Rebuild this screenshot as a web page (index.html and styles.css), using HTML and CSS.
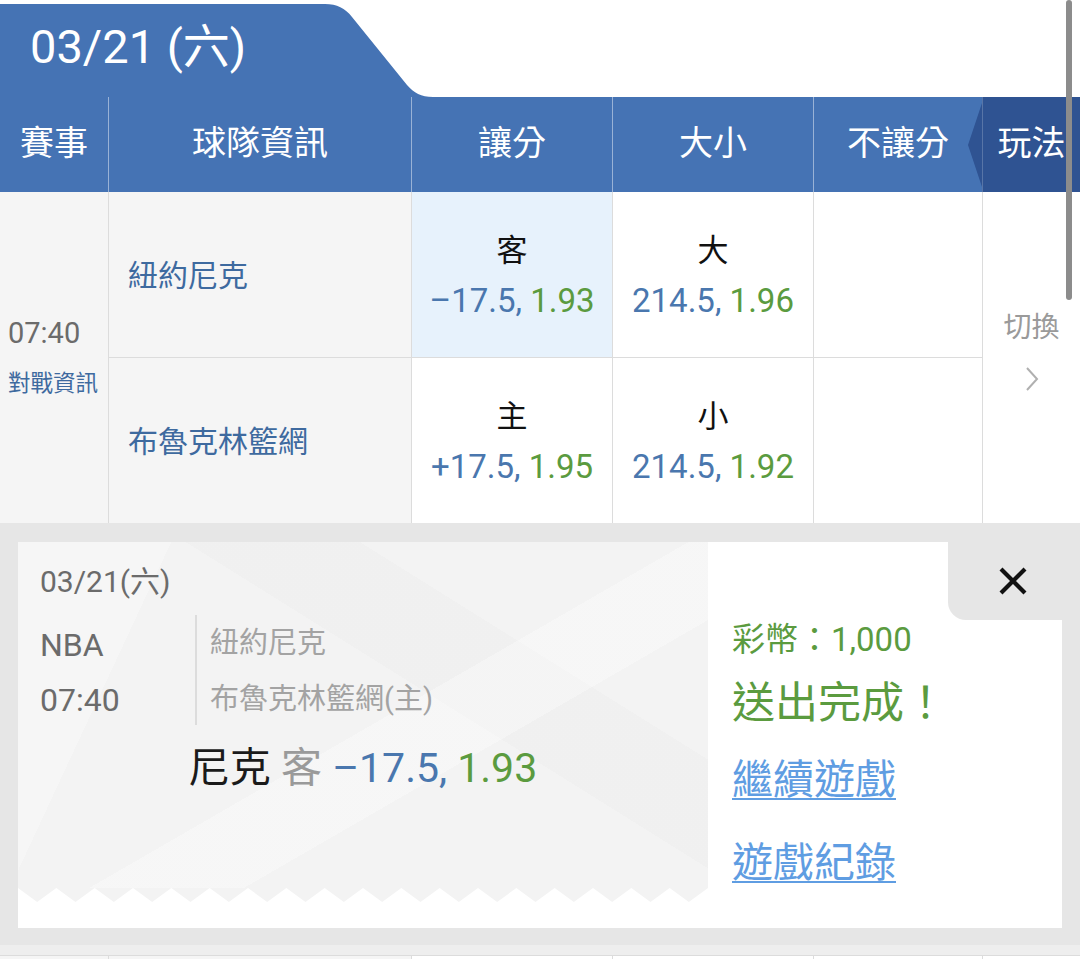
FILE: index.html
```html
<!DOCTYPE html>
<html lang="zh-Hant">
<head>
<meta charset="utf-8">
<title>投注</title>
<link rel="stylesheet" href="styles.css">
</head>
<body>
<div class="page">
  <div class="tab-bar">
    <div class="date-tab"><span class="lt">03/21 (</span>六<span class="lt">)</span></div>
    <svg class="tab-slope" width="118" height="93" viewBox="0 0 118 93"><path d="M0 0 H10 C22 0 30 4 37 13 L92 81 C99 89 106 93 118 93 H0 Z" fill="#4573b4"/></svg>
  </div>

  <div class="grid head">
    <div class="hcell">賽事</div>
    <div class="hcell">球隊資訊</div>
    <div class="hcell">讓分</div>
    <div class="hcell">大小</div>
    <div class="hcell">不讓分</div>
    <div class="hcell play">玩法</div>
  </div>

  <div class="grid rows">
    <div class="cell event">
      <div class="time lt">07:40</div>
      <div class="vs">對戰資訊</div>
    </div>
    <div class="cell team top">紐約尼克</div>
    <div class="cell odds top selected">
      <div class="side">客</div>
      <div class="line"><span class="num">–17.5,</span> <span class="rate">1.93</span></div>
    </div>
    <div class="cell odds top">
      <div class="side">大</div>
      <div class="line"><span class="num">214.5,</span> <span class="rate">1.96</span></div>
    </div>
    <div class="cell blank top"></div>
    <div class="cell switch">
      <div class="switch-label">切換</div>
      <svg class="chev" width="14" height="26" viewBox="0 0 14 26"><polyline points="2,2 12,13 2,24" fill="none" stroke="#b0b0b0" stroke-width="2"/></svg>
    </div>
    <div class="cell team">布魯克林籃網</div>
    <div class="cell odds">
      <div class="side">主</div>
      <div class="line"><span class="num">+17.5,</span> <span class="rate">1.95</span></div>
    </div>
    <div class="cell odds">
      <div class="side">小</div>
      <div class="line"><span class="num">214.5,</span> <span class="rate">1.92</span></div>
    </div>
    <div class="cell blank"></div>
  </div>

  <div class="overlay">
    <div class="card">
      <div class="ticket">
        <div class="ticket-body">
          <div class="t-date"><span class="lt">03/21(</span>六<span class="lt">)</span></div>
          <div class="t-info">
            <div class="t-meta lt">
              <div>NBA</div>
              <div>07:40</div>
            </div>
            <div class="t-teams">
              <div>紐約尼克</div>
              <div>布魯克林籃網(主)</div>
            </div>
          </div>
          <div class="t-bet"><span class="b-team">尼克</span> <span class="b-side">客</span> <span class="num">–17.5,</span> <span class="rate">1.93</span></div>
        </div>
        <svg class="zigzag" width="690" height="14" viewBox="0 0 180 14" preserveAspectRatio="none"><polygon fill="#f3f3f3" points="0,0 180,0 175,14 170,0 165,14 160,0 155,14 150,0 145,14 140,0 135,14 130,0 125,14 120,0 115,14 110,0 105,14 100,0 95,14 90,0 85,14 80,0 75,14 70,0 65,14 60,0 55,14 50,0 45,14 40,0 35,14 30,0 25,14 20,0 15,14 10,0 5,14 0,0"/></svg>
      </div>
      <div class="result">
        <div class="close-row">
          <div class="close">
            <svg width="30" height="28" viewBox="0 0 30 28"><path d="M3 2 L27 26 M27 2 L3 26" stroke="#111" stroke-width="4.2" stroke-linecap="butt"/></svg>
          </div>
        </div>
        <div class="coins">彩幣：<span class="lt">1,000</span></div>
        <div class="done">送出完成！</div>
        <a class="link first" href="#">繼續遊戲</a>
        <a class="link" href="#">遊戲紀錄</a>
      </div>
    </div>
  </div>

  <div class="strip"></div>
  <div class="grid foot">
    <div class="fcell"></div>
    <div class="fcell"></div>
    <div class="fcell"></div>
    <div class="fcell"></div>
    <div class="fcell"></div>
    <div class="fcell"></div>
  </div>

  <div class="scrollbar"></div>
</div>
</body>
</html>
```

FILE: styles.css
```css
* { box-sizing: border-box; }
html, body { margin: 0; padding: 0; background: #fff; }
body {
  font-family: "Roboto", "Noto Sans CJK TC", "Noto Sans", sans-serif;
}
.lt, .num, .rate { font-weight: 400; }
.page {
  position: relative;
  width: 1080px;
  height: 959px;
  overflow: hidden;
  background: #fff;
}

/* date tab */
.tab-bar {
  display: flex;
  align-items: flex-end;
  height: 97px;
}
.date-tab {
  width: 315px;
  height: 93px;
  background: #4573b4;
  color: #fff;
  font-size: 47px;
  line-height: 86px;
  padding-left: 30px;
  white-space: nowrap;
}
.tab-slope { display: block; }

/* grids */
.grid {
  display: grid;
  grid-template-columns: 108px 303px 201px 201px 169px 98px;
}

.head {
  height: 95px;
  background: #4573b4;
}
.hcell {
  color: #fff;
  font-size: 34px;
  line-height: 93px;
  text-align: center;
  border-left: 1px solid rgba(255,255,255,0.45);
  white-space: nowrap;
}
.hcell:first-child { border-left: none; }
.hcell.play {
  position: relative;
  background: #2f5392;
  border-left: 1px solid rgba(255,255,255,0.2);
}
.hcell.play::before {
  content: "";
  position: absolute;
  left: -15px;
  top: 6px;
  border-right: 14px solid #2f5392;
  border-top: 42px solid transparent;
  border-bottom: 42px solid transparent;
}

.rows {
  grid-template-rows: 166px 165px;
}
.cell {
  border-left: 1px solid #dcdcdc;
  background: #fff;
}
.cell.top { border-bottom: 1px solid #dcdcdc; }
.event {
  grid-row: span 2;
  border-left: none;
  background: #f5f5f5;
  display: flex;
  flex-direction: column;
  justify-content: center;
  padding-left: 8px;
  padding-bottom: 4px;
  gap: 15px;
}
.time {
  font-size: 29px;
  line-height: 40px;
  color: #6b6b6b;
}
.vs {
  font-size: 22.5px;
  line-height: 30px;
  color: #3e6a9f;
  white-space: nowrap;
}
.team {
  background: #f5f5f5;
  display: flex;
  align-items: center;
  padding-left: 19px;
  padding-bottom: 3px;
  font-size: 30px;
  color: #3e6a9f;
}
.odds {
  display: flex;
  flex-direction: column;
  align-items: center;
  justify-content: center;
  gap: 6px;
  padding-top: 2px;
}
.odds.selected { background: #e7f2fc; }
.side {
  font-size: 31px;
  line-height: 44px;
  color: #111;
}
.line {
  font-size: 33px;
  line-height: 44px;
  white-space: nowrap;
}
.num { color: #4a77ae; }
.rate { color: #5b9b3f; }
.switch {
  grid-column: 6;
  grid-row: 1 / span 2;
  display: flex;
  flex-direction: column;
  align-items: center;
  padding-top: 116px;
  gap: 18px;
}
.switch-label {
  font-size: 28px;
  line-height: 40px;
  color: #9a9a9a;
}
.chev { display: block; }

/* overlay */
.overlay {
  background: #e6e6e6;
  padding: 19px 18px 17px;
}
.card {
  display: flex;
  height: 386px;
  background: #fff;
}
.ticket {
  width: 690px;
  display: flex;
  flex-direction: column;
}
.ticket-body {
  height: 346px;
  padding: 20px 0 0 22px;
  background:
    linear-gradient(150deg, rgba(255,255,255,0) 52%, rgba(255,255,255,0.3) 52%, rgba(255,255,255,0.3) 64%, rgba(255,255,255,0) 64%),
    linear-gradient(32deg, rgba(0,0,0,0) 58%, rgba(0,0,0,0.01) 58%, rgba(0,0,0,0.01) 72%, rgba(0,0,0,0) 72%),
    linear-gradient(115deg, rgba(255,255,255,0.25) 18%, rgba(255,255,255,0) 18%),
    #f3f3f3;
}
.zigzag { display: block; }
.t-date {
  font-size: 30px;
  line-height: 40px;
  color: #6b6b6b;
}
.t-info {
  display: flex;
  margin-top: 13px;
  height: 110px;
}
.t-meta {
  width: 155px;
  font-size: 32px;
  color: #6b6b6b;
}
.t-meta div { height: 55px; line-height: 60px; }
.t-teams {
  border-left: 2px solid #dcdcdc;
  padding-left: 13px;
  font-size: 29px;
  line-height: 56px;
  color: #a3a3a3;
  white-space: nowrap;
}
.t-bet {
  margin-top: 15px;
  margin-left: -22px;
  text-align: center;
  font-size: 41px;
  line-height: 56px;
  white-space: nowrap;
}
.b-team { color: #1a1a1a; }
.b-side { color: #9a9a9a; }

.result {
  flex: 1;
  display: flex;
  flex-direction: column;
  align-items: flex-start;
  padding-left: 24px;
}
.close-row {
  align-self: stretch;
  display: flex;
  justify-content: flex-end;
  height: 78px;
}
.close {
  width: 114px;
  height: 78px;
  background: #e6e6e6;
  border-bottom-left-radius: 18px;
  display: flex;
  align-items: center;
  padding-left: 50px;
}
.close svg { display: block; }
.coins {
  font-size: 33px;
  line-height: 40px;
  color: #5b9b3f;
  white-space: nowrap;
}
.done {
  margin-top: 15px;
  font-size: 43px;
  line-height: 56px;
  color: #5b9b3f;
  white-space: nowrap;
}
.link {
  font-size: 41px;
  line-height: 52px;
  color: #5f9de2;
  text-decoration: underline;
  text-decoration-thickness: 2px;
  text-underline-offset: 4px;
  white-space: nowrap;
  margin-top: 31px;
}
.link.first { margin-top: 23px; }

.strip {
  height: 10px;
  background: #eeeeee;
}
.foot {
  height: 4px;
  border-top: 1px solid #dcdcdc;
}
.fcell {
  border-left: 1px solid #dcdcdc;
  background: #fff;
}
.fcell:first-child { border-left: none; background: #f5f5f5; }
.fcell:nth-child(2) { background: #f5f5f5; }

.scrollbar {
  position: absolute;
  left: 1066px;
  top: 0;
  width: 6px;
  height: 300px;
  border-radius: 3px;
  background: #8c8c8c;
}
```
